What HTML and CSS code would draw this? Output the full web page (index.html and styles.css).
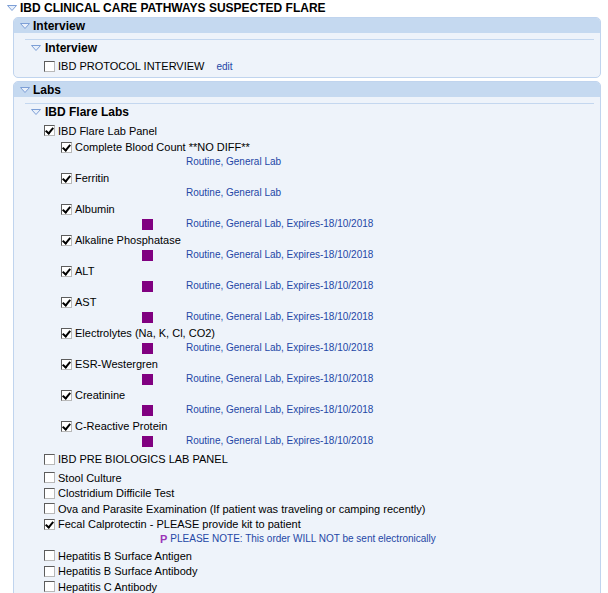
FILE: index.html
```html
<!DOCTYPE html>
<html lang="en">
<head>
    <meta charset="UTF-8">
    <meta name="viewport" content="width=device-width, initial-scale=1.0">
    <title>IBD Clinical Care Pathways Suspected Flare</title>
    <link rel="stylesheet" href="styles.css">
</head>
<body>
    <div class="plan-title">
        <svg class="twisty" width="10" height="6" viewBox="0 0 10 6"><polygon points="0.5,0.5 9.5,0.5 5,5.5"/></svg>
        <span>IBD CLINICAL CARE PATHWAYS SUSPECTED FLARE</span>
    </div>

    <!-- Interview phase -->
    <div class="phase">
        <div class="phase-head">
            <svg class="twisty" width="10" height="6" viewBox="0 0 10 6"><polygon points="0.5,0.5 9.5,0.5 5,5.5"/></svg>
            <span>Interview</span>
        </div>
        <div class="phase-body">
            <div class="section">
                <div class="section-head">
                    <svg class="twisty" width="10" height="6" viewBox="0 0 10 6"><polygon points="0.5,0.5 9.5,0.5 5,5.5"/></svg>
                    <span>Interview</span>
                </div>
                <div class="group">
                    <div class="row lvl1"><span class="cb"></span>IBD PROTOCOL INTERVIEW<a class="edit" href="#">edit</a></div>
                </div>
            </div>
        </div>
    </div>

    <!-- Labs phase -->
    <div class="phase">
        <div class="phase-head">
            <svg class="twisty" width="10" height="6" viewBox="0 0 10 6"><polygon points="0.5,0.5 9.5,0.5 5,5.5"/></svg>
            <span>Labs</span>
        </div>
        <div class="phase-body">
            <div class="section">
                <div class="section-head">
                    <svg class="twisty" width="10" height="6" viewBox="0 0 10 6"><polygon points="0.5,0.5 9.5,0.5 5,5.5"/></svg>
                    <span>IBD Flare Labs</span>
                </div>
                <div class="group">
                    <div class="row lvl1 set-row"><span class="cb on"></span>IBD Flare Lab Panel</div>

                    <div class="row lvl2"><span class="cb on"></span>Complete Blood Count **NO DIFF**</div>
                    <div class="detail"><span class="flag"></span><span class="info">Routine, General Lab</span></div>

                    <div class="row lvl2"><span class="cb on"></span>Ferritin</div>
                    <div class="detail"><span class="flag"></span><span class="info">Routine, General Lab</span></div>

                    <div class="row lvl2"><span class="cb on"></span>Albumin</div>
                    <div class="detail"><span class="flag rx"></span><span class="info">Routine, General Lab, Expires-18/10/2018</span></div>

                    <div class="row lvl2"><span class="cb on"></span>Alkaline Phosphatase</div>
                    <div class="detail"><span class="flag rx"></span><span class="info">Routine, General Lab, Expires-18/10/2018</span></div>

                    <div class="row lvl2"><span class="cb on"></span>ALT</div>
                    <div class="detail"><span class="flag rx"></span><span class="info">Routine, General Lab, Expires-18/10/2018</span></div>

                    <div class="row lvl2"><span class="cb on"></span>AST</div>
                    <div class="detail"><span class="flag rx"></span><span class="info">Routine, General Lab, Expires-18/10/2018</span></div>

                    <div class="row lvl2"><span class="cb on"></span>Electrolytes (Na, K, Cl, CO2)</div>
                    <div class="detail"><span class="flag rx"></span><span class="info">Routine, General Lab, Expires-18/10/2018</span></div>

                    <div class="row lvl2"><span class="cb on"></span>ESR-Westergren</div>
                    <div class="detail"><span class="flag rx"></span><span class="info">Routine, General Lab, Expires-18/10/2018</span></div>

                    <div class="row lvl2"><span class="cb on"></span>Creatinine</div>
                    <div class="detail"><span class="flag rx"></span><span class="info">Routine, General Lab, Expires-18/10/2018</span></div>

                    <div class="row lvl2"><span class="cb on"></span>C-Reactive Protein</div>
                    <div class="detail"><span class="flag rx"></span><span class="info">Routine, General Lab, Expires-18/10/2018</span></div>

                    <div class="row lvl1 pre-row"><span class="cb"></span>IBD PRE BIOLOGICS LAB PANEL</div>

                    <div class="row lvl1 loose first-loose"><span class="cb"></span>Stool Culture</div>
                    <div class="row lvl1 loose"><span class="cb"></span>Clostridium Difficile Test</div>
                    <div class="row lvl1 loose"><span class="cb"></span>Ova and Parasite Examination (If patient was traveling or camping recently)</div>
                    <div class="row lvl1 loose"><span class="cb on"></span>Fecal Calprotectin - PLEASE provide kit to patient</div>
                    <div class="note"><span class="note-p">P</span><span class="info">PLEASE NOTE: This order WILL NOT be sent electronically</span></div>
                    <div class="row lvl1 loose"><span class="cb"></span>Hepatitis B Surface Antigen</div>
                    <div class="row lvl1 loose"><span class="cb"></span>Hepatitis B Surface Antibody</div>
                    <div class="row lvl1 loose"><span class="cb"></span>Hepatitis C Antibody</div>
                </div>
            </div>
        </div>
    </div>
</body>
</html>
```

FILE: styles.css
```css
/* General Styles */
html, body {
    overflow: hidden;
}

body {
    margin: 0;
    font-family: "Liberation Sans", Arial, sans-serif;
    font-size: 11px;
    color: #000;
    background: #fff;
}

.twisty {
    flex: none;
    display: block;
}

.twisty polygon {
    fill: #e9f0fa;
    stroke: #7d9fd6;
    stroke-width: 1;
}

/* Plan title */
.plan-title {
    display: flex;
    align-items: center;
    height: 16px;
    padding-left: 7px;
    font-size: 12px;
    font-weight: bold;
}

.plan-title .twisty {
    margin-right: 3px;
}

/* Phases (rounded blue panels) */
.phase {
    margin: 3px 7px 0 13px;
    border: 1px solid #c0d4ee;
    border-radius: 5px;
    background: #eef3fa;
    overflow: hidden;
}

.plan-title + .phase {
    margin-top: 1px;
}

.phase-head {
    display: flex;
    align-items: center;
    height: 15px;
    padding-left: 6px;
    background: #c5d9f0;
    font-size: 12px;
    font-weight: bold;
}

.phase-head .twisty {
    margin-right: 3px;
}

.phase-body {
    padding: 6px 6px 3px 11px;
}

/* Sections inside a phase */
.section {
    border-top: 1px solid #c4d7ef;
}

.section-head {
    display: flex;
    align-items: center;
    height: 16px;
    padding-left: 6px;
    font-size: 12px;
    font-weight: bold;
}

.section-head .twisty {
    margin-right: 4px;
}

.group {
    margin-top: 2px;
}

/* Order rows */
.row {
    display: flex;
    align-items: center;
    height: 16px;
    white-space: nowrap;
}

.lvl1 {
    padding-left: 19px;
}

.lvl2 {
    padding-left: 36px;
}

.set-row {
    height: 17px;
}

.pre-row {
    margin-top: 2px;
}

.loose {
    height: 15.5px;
}

.first-loose {
    margin-top: 3px;
}

.cb {
    flex: none;
    position: relative;
    box-sizing: border-box;
    width: 11px;
    height: 11px;
    margin-right: 3px;
    background: #fff;
    border: 1px solid;
    border-color: #5c5c5c #b8b8b8 #b8b8b8 #5c5c5c;
}

.cb.on::after {
    content: "";
    position: absolute;
    left: 2px;
    top: 0;
    width: 3px;
    height: 6px;
    border: solid #000;
    border-width: 0 2px 2px 0;
    transform: rotate(40deg);
}

.edit {
    margin-left: 12px;
    font-size: 10px;
    color: #2447a6;
    text-decoration: none;
}

/* Order details under a row */
.detail {
    display: flex;
    align-items: flex-start;
    height: 15px;
    padding-left: 117px;
}

.flag {
    flex: none;
    width: 11px;
    height: 11px;
    margin-top: 2px;
    margin-right: 33px;
}

.flag.rx {
    background: #800080;
}

.info {
    font-size: 10px;
    line-height: 14px;
    color: #2447a6;
    white-space: nowrap;
}

.note {
    display: flex;
    align-items: flex-start;
    height: 16px;
    padding-left: 135px;
}

.note-p {
    font-size: 11px;
    line-height: 14px;
    font-weight: bold;
    color: #9b35b8;
    margin-right: 3px;
}
```
